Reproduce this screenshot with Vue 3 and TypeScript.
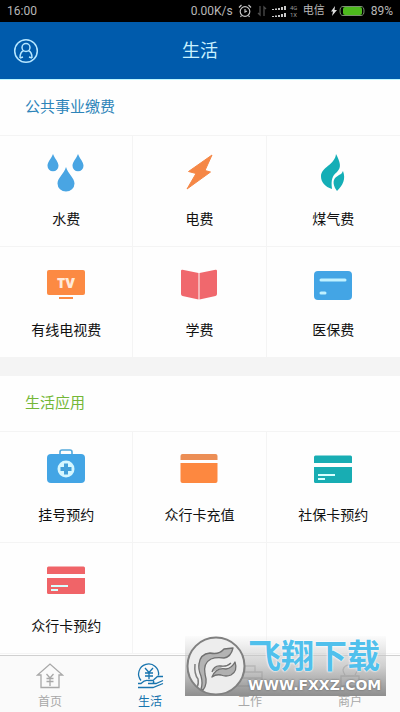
<script setup lang="ts">
interface Entry {
  label: string
  icon: string
}

interface Section {
  title: string
  tone: string
  entries: Entry[]
  blanks: number
}

const sections: Section[] = [
  {
    title: '公共事业缴费',
    tone: 'blue',
    blanks: 0,
    entries: [
      { label: '水费', icon: 'water' },
      { label: '电费', icon: 'power' },
      { label: '煤气费', icon: 'gas' },
      { label: '有线电视费', icon: 'tv' },
      { label: '学费', icon: 'book' },
      { label: '医保费', icon: 'medical' },
    ],
  },
  {
    title: '生活应用',
    tone: 'green',
    blanks: 2,
    entries: [
      { label: '挂号预约', icon: 'kit' },
      { label: '众行卡充值', icon: 'recharge' },
      { label: '社保卡预约', icon: 'social' },
      { label: '众行卡预约', icon: 'reserve' },
    ],
  },
]

const tabs: Entry[] = [
  { label: '首页', icon: 'home' },
  { label: '生活', icon: 'life' },
  { label: '工作', icon: 'work' },
  { label: '商户', icon: 'shop' },
]
const activeTab = 'life'
</script>

<template>
  <div class="page">
    <div class="status">
      <span class="time">16:00</span>
      <span>0.00K/s</span>
      <svg class="alarm" width="14" height="14" viewBox="0 0 14 14" fill="none" stroke="#c4c4c4" stroke-width="1.2">
        <circle cx="7" cy="7.5" r="4.8" />
        <path d="M7 5v3l2-1M1 3.5 3.5 1M13 3.5 10.5 1M3.5 11.5 2.5 13M10.5 11.5l1 1.5" />
      </svg>
      <svg class="arrows" width="10" height="12" viewBox="0 0 10 12" fill="none" stroke="#4c4c4c" stroke-width="1.3">
        <path d="M3 1v9L1 8M7 11V2l2 2" />
      </svg>
      <svg class="signal" width="26" height="14" viewBox="0 0 26 14">
        <g fill="#c8c8c8">
          <path d="M0 5h2v1H0zM3 4.5h2V6H3zM6 4h2v2H6zM9 3h2v3H9zM12 2h2v4h-2z" />
          <path d="M0 12h2v1H0zM3 11.5h2V13H3zM6 11h2v2H6zM9 10h2v3H9zM12 9h2v4h-2z" />
        </g>
        <g class="network" fill="#999">
          <text x="18" y="6">4G</text>
          <text x="18" y="13">1X</text>
        </g>
      </svg>
      <span class="carrier">电信</span>
      <svg class="battery" width="36" height="14" viewBox="0 0 36 14">
        <path d="M5 2 1 7.5h2L2 12l5-6H4.5z" fill="#e0e0e0" />
        <path d="M13 2.5h18q3 0 3 4.5t-3 4.5H13q-3 0-3-4.500t3-4.500z" fill="none" stroke="#7b8f72" />
        <rect x="13" y="3" width="19" height="8" rx="2" fill="#4db91d" />
      </svg>
      <span>89%</span>
    </div>

    <header class="header">
      <button class="profile" type="button" aria-label="个人中心">
        <svg width="26" height="26" viewBox="0 0 26 26" fill="none" stroke="#b5e6ff" stroke-width="1.5">
          <circle cx="13" cy="13" r="11.3" />
          <circle cx="13" cy="9.5" r="4" />
          <path d="M7 20q0-6 3.500-7.200M19 20q0-6-3.500-7.200M7 20l3-1M19 20l-3-1" />
        </svg>
      </button>
      <h1>生活</h1>
    </header>

    <main>
      <section v-for="section in sections" :key="section.title" class="section">
        <h2 :class="section.tone">{{ section.title }}</h2>
        <div class="grid">
          <button v-for="entry in section.entries" :key="entry.label" class="cell" type="button">
            <svg class="icon" width="40" height="40" viewBox="0 0 40 40">
              <g v-if="entry.icon === 'water'" fill="#49a5e3">
                <path d="M7 1C9 6 12.500 9 12.500 12.800A5.500 5.500 0 0 1 1.500 12.800C1.500 9 5 6 7 1Z" />
                <path d="M32 1C34 6 37.500 9 37.500 12.800A5.500 5.500 0 0 1 26.500 12.800C26.500 9 30 6 32 1Z" />
                <path d="M20 14C22 21 28.500 25 28.500 30.500A8.500 8 0 0 1 11.500 30.500C11.500 25 18 21 20 14Z" />
              </g>
              <path v-else-if="entry.icon === 'power'" d="M33 2 9.500 18.500l7.500 2L8 36l23.500-17-5.500-1.500Z" fill="#f58746" stroke="#f58746" stroke-linejoin="round" />
              <g v-else-if="entry.icon === 'gas'" fill="#14aeb6">
                <path d="M23 1C27 9 29 14 24 19C19 23 18 27 19 36C12 34 8 29 8 23.500C8 14 22 12 23 1Z" />
                <path d="M30 18C33 26 30 32 24 38L22 35C19 28 21 25 26 22C28.500 21 29 20 30 18Z" />
              </g>
              <g v-else-if="entry.icon === 'tv'" fill="#fc8a43">
                <rect x="1" y="6" width="38" height="25" rx="2" />
                <rect x="13" y="33" width="14" height="2" />
                <text class="screen" x="20" y="23.500" text-anchor="middle">TV</text>
              </g>
              <g v-else-if="entry.icon === 'book'" fill="#f0686d">
                <path d="M2 7q0-1.500 1.500-1.200L19.500 9v26.500L3.500 32Q2 31.500 2 30Z" />
                <path d="M38 7q0-1.500-1.500-1.200L20.500 9v26.500l16-3.500q1.500-.5 1.500-2Z" />
              </g>
              <g v-else-if="entry.icon === 'medical'">
                <rect x="1" y="7" width="38" height="29" rx="4" fill="#43a5e5" />
                <path d="M8 16h24M8 29h4" stroke="#c0f1ff" stroke-width="3" stroke-linecap="round" />
              </g>
              <g v-else-if="entry.icon === 'kit'">
                <path d="M14 6V3q0-2 2-2h8q2 0 2 2v3" fill="none" stroke="#54a9dc" stroke-width="1.600" />
                <rect x="1" y="5" width="38" height="29" rx="4" fill="#43a5e5" />
                <circle cx="20" cy="20" r="8.500" fill="#d5f7ff" />
                <path d="M20 14.500v11M14.500 20h11" stroke="#43a0d9" stroke-width="4" />
              </g>
              <g v-else-if="entry.icon === 'recharge'" fill="#fd8840">
                <path d="M1.500 11V7q0-2 2-2h33q2 0 2 2v4z" fill="#ec8e55" />
                <path d="M1.500 14h37v18q0 2-2 2h-33q-2 0-2-2z" />
              </g>
              <g v-else :class="entry.icon">
                <path d="M1 14V8q0-1.500 1.500-1.500h35Q39 6.500 39 8v6z" />
                <path d="M1 18h38v14.500q0 1.500-1.500 1.500h-35Q1 34 1 32.500z" />
                <path d="M5 26h17M5 30h7" stroke="#d7ffff" stroke-width="1.800" />
              </g>
            </svg>
            <span>{{ entry.label }}</span>
          </button>
          <div v-for="n in section.blanks" :key="n" class="cell"></div>
        </div>
      </section>
    </main>

    <nav class="tabs">
      <a v-for="tab in tabs" :key="tab.icon" href="#" :class="{ active: tab.icon === activeTab }">
        <svg width="28" height="28" viewBox="0 0 28 28" fill="none" stroke="currentColor" stroke-width="1.300">
          <g v-if="tab.icon === 'home'">
            <path d="M5 13H1.500L14 2l12.500 11H23v12.500H5z" />
            <path d="M10.500 12 14 16l3.500-4M14 16v8M10.500 16.500h7M10.500 19.500h7" />
          </g>
          <g v-else-if="tab.icon === 'life'">
            <path d="M5 18.500A10 10 0 1 1 22.500 13.500" />
            <path d="M9 6l4 4.500L17 6M13 10.500V17M9 11h8M9 14h8" />
            <path d="M2 21.500h3q4-4 7-3h5q2 2-1 3h-4M17.500 18l4-3.500h5.500M16 21.500h4l7-3M2 25.500h15l10-4" />
          </g>
          <g v-else-if="tab.icon === 'work'">
            <path d="M2 10h24v14H2zM9 10V4h10v6M2 16h24" />
          </g>
          <g v-else>
            <path d="M9 13q-2-3-2-5 1-5 7-5t7 5q0 2-2 5M5 24V14h18v10z" />
          </g>
        </svg>
        <span>{{ tab.label }}</span>
      </a>
    </nav>

    <div class="badge">
      <svg class="badge-logo" width="62" height="60" viewBox="0 0 62 60">
        <circle cx="31" cy="30" r="28.500" fill="#ededed" stroke="#808080" stroke-width="2" />
        <path d="M18 54Q23 48 20 38Q18 27 26 23Q31 21 39 22Q46 21 48 12L39 13Q34 19 25 17Q15 18 14 28Q13 33 16 40Q18 47 16 53Z" fill="#b3b3b3" stroke="#707070" stroke-width="1.300" stroke-linejoin="round" />
        <path d="M10 28Q9 38 13 43Q14 48 12 51" fill="none" stroke="#808080" stroke-width="1.500" />
        <path d="M27 41Q31 31 41 33Q47 32 50 26Q53 35 46 39Q41 41 36 39Q31 38 27 41ZM27 36Q29 29 36 30Q42 31 46 27" fill="#b0b0b0" stroke="#707070" stroke-width="1.300" stroke-linejoin="round" />
      </svg>
      <div class="badge-text">
        <strong>飞翔下载</strong>
        <span>WWW.FXXZ.COM</span>
      </div>
    </div>
  </div>
</template>

<style>
body {
  margin: 0;
  background: #fefefe;
}
</style>

<style scoped>
.page {
  position: relative;
  display: flex;
  flex-direction: column;
  min-height: 100vh;
  font-family: "Liberation Sans", "Noto Sans CJK SC", sans-serif;
  color: #111;
}

button {
  border: 0;
  padding: 0;
  background: none;
  font: inherit;
  color: inherit;
}

.status {
  display: flex;
  align-items: center;
  height: 22px;
  padding: 0 7px;
  gap: 5px;
  background: #000;
  color: #b8b8b8;
  font-family: Roboto, "Noto Sans CJK SC", sans-serif;
  font-size: 12px;
  line-height: 22px;
}

.time {
  margin-right: auto;
}

.network {
  font-size: 6px;
}

.carrier {
  font-size: 11px;
}

.header {
  display: grid;
  grid-template-columns: 1fr auto 1fr;
  align-items: center;
  height: 57px;
  padding: 0 13px;
  background: #005bac;
  border-bottom: 1px solid #bdf6ff;
  color: #c9f1ff;
}

.profile {
  width: 26px;
  height: 26px;
}

.profile svg {
  display: block;
}

h1 {
  margin: 0;
  font-size: 18px;
  line-height: 24px;
  font-weight: 400;
}

main {
  flex: 1;
}

.section + .section {
  border-top: 18px solid #f4f4f4;
}

h2 {
  margin: 0;
  padding: 15px 25px 16px;
  border-bottom: 1px solid #f4f4f4;
  font-size: 15px;
  line-height: 24px;
  font-weight: 400;
}

.blue {
  color: #2d84b9;
}

.green {
  color: #74b737;
}

.grid {
  display: grid;
  grid-template-columns: repeat(3, 1fr);
}

.cell {
  display: flex;
  flex-direction: column;
  align-items: center;
  gap: 14px;
  padding: 17px 0 15px;
  border-right: 1px solid #f4f4f4;
  border-bottom: 1px solid #f4f4f4;
  font-size: 14px;
  line-height: 24px;
}

.cell:nth-child(3n) {
  border-right: 0;
}

.screen {
  fill: #ffe9d9;
  font-family: "Open Sans", sans-serif;
  font-size: 14px;
  font-weight: 800;
}

.social {
  fill: #18adb3;
}

.reserve {
  fill: #f06468;
}

.tabs {
  display: grid;
  grid-template-columns: repeat(4, 1fr);
  border-top: 1px solid #d0d0d0;
  background: #fafafa;
}

.tabs a {
  display: flex;
  flex-direction: column;
  align-items: center;
  padding: 6px 0 2px;
  gap: 4px;
  color: #a8a8a8;
  font-size: 12px;
  line-height: 16px;
  text-decoration: none;
}

.tabs .active {
  color: #1874ae;
}

.badge {
  position: absolute;
  right: 14px;
  bottom: 16px;
  display: flex;
  align-items: center;
  gap: 1px;
  width: 201px;
  height: 60px;
  background: linear-gradient(rgba(240, 240, 240, 0.2), rgba(190, 190, 190, 0.7) 50%, rgba(130, 130, 130, 0.9));
}

.badge-logo {
  flex: none;
}

.badge-text {
  display: flex;
  flex-direction: column;
  align-items: flex-start;
  flex: 1;
  color: #fff;
}

.badge-text strong {
  font-size: 33px;
  line-height: 38px;
  font-weight: 700;
  color: #50c0ec;
  text-shadow: 0 0 2px #fff, 0 0 2px #fff;
}

.badge-text span {
  font-family: "DejaVu Sans", sans-serif;
  font-size: 14px;
  line-height: 18px;
  font-weight: 700;
  text-shadow: 0 0 2px #555;
}
</style>
